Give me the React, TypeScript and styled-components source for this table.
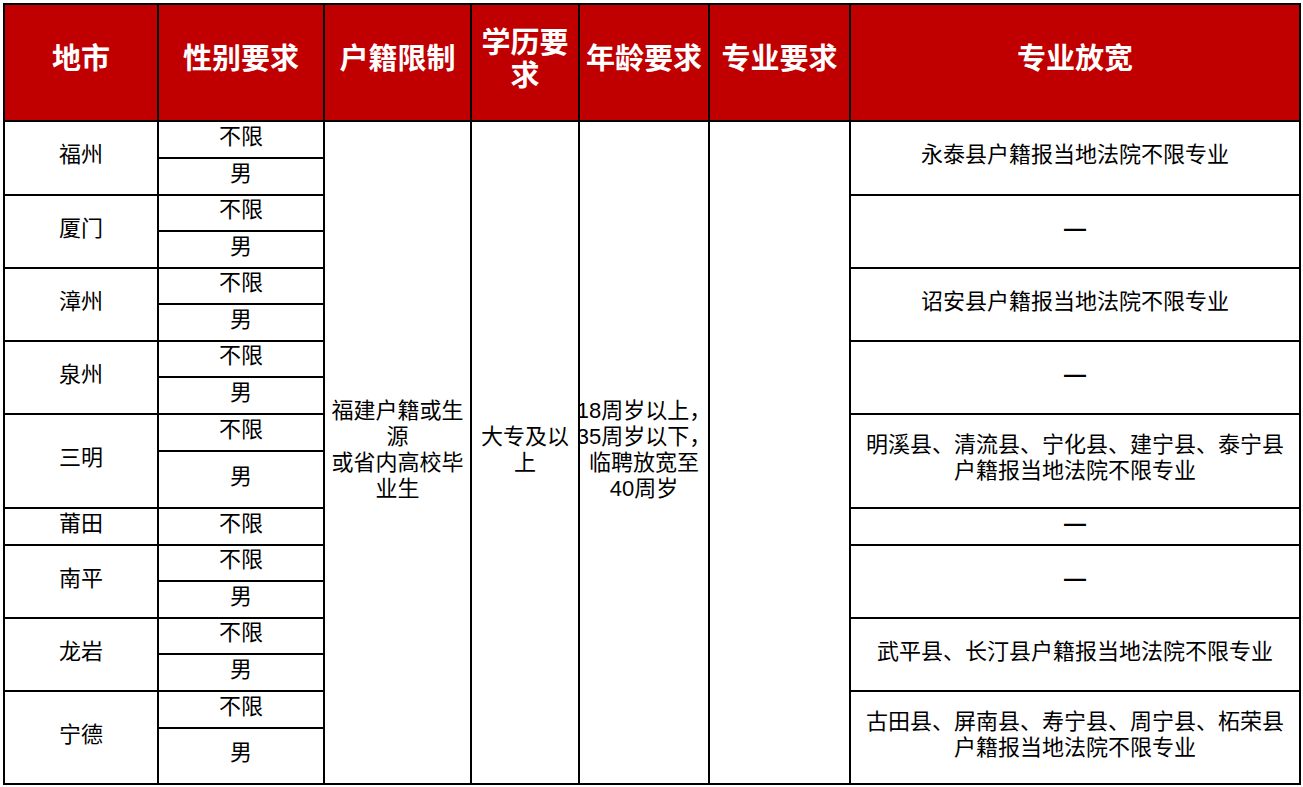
import React from "react";
import styled, { createGlobalStyle } from "styled-components";

const GlobalStyle = createGlobalStyle`
  html, body {
    margin: 0;
    padding: 0;
    background: #ffffff;
  }
  body {
    font-family: "Liberation Sans", "Noto Sans CJK SC", sans-serif;
  }
`;

const Page = styled.div`
  padding: 3px 0 0 3px;
`;

const Table = styled.div`
  display: grid;
  grid-template-columns: 152px 164px 145px 106px 128px 139px 448px;
  grid-template-rows: 115px 35px 35px 34px 35px 34px 35px 34px 35px 35px 55px 35px 34px 35px 34px 35px 35px 54px;
  gap: 2px;
  padding: 2px;
  background: #000000;
  width: max-content;
`;

type Place = { $col: number; $row: number; $span?: number };

const HeaderCell = styled.div<Place>`
  grid-column: ${(p) => p.$col};
  grid-row: ${(p) => p.$row} / span ${(p) => p.$span ?? 1};
  background: #c00000;
  color: #ffffff;
  font-family: "Noto Sans CJK SC", sans-serif;
  font-weight: 700;
  font-size: 29px;
  line-height: 33px;
  display: flex;
  align-items: center;
  justify-content: center;
  text-align: center;
  padding: 0 0 12px;
  box-sizing: border-box;
`;

const BodyCell = styled.div<Place>`
  grid-column: ${(p) => p.$col};
  grid-row: ${(p) => p.$row} / span ${(p) => p.$span ?? 1};
  background: #ffffff;
  color: #000000;
  font-family: "Liberation Sans", "Noto Sans CJK SC", sans-serif;
  font-size: 22px;
  line-height: 26px;
  display: flex;
  flex-direction: column;
  align-items: center;
  justify-content: center;
  text-align: center;
  padding: 0 0 6px;
  box-sizing: border-box;
  overflow: hidden;
`;

const Line = styled.span`
  display: block;
  white-space: nowrap;
`;

const DashText = styled.span`
  display: block;
  font-family: "Liberation Sans", sans-serif;
  font-weight: 700;
`;

const WrapText = styled.span`
  display: block;
  max-width: 100%;
`;

type Gender = "不限" | "男";
type City = { name: string; genders: Gender[]; relax: string[] };

const cities: City[] = [
  { name: "福州", genders: ["不限", "男"], relax: ["永泰县户籍报当地法院不限专业"] },
  { name: "厦门", genders: ["不限", "男"], relax: [] },
  { name: "漳州", genders: ["不限", "男"], relax: ["诏安县户籍报当地法院不限专业"] },
  { name: "泉州", genders: ["不限", "男"], relax: [] },
  {
    name: "三明",
    genders: ["不限", "男"],
    relax: ["明溪县、清流县、宁化县、建宁县、泰宁县", "户籍报当地法院不限专业"],
  },
  { name: "莆田", genders: ["不限"], relax: [] },
  { name: "南平", genders: ["不限", "男"], relax: [] },
  { name: "龙岩", genders: ["不限", "男"], relax: ["武平县、长汀县户籍报当地法院不限专业"] },
  {
    name: "宁德",
    genders: ["不限", "男"],
    relax: ["古田县、屏南县、寿宁县、周宁县、柘荣县", "户籍报当地法院不限专业"],
  },
];

const headers = ["地市", "性别要求", "户籍限制", "学历要求", "年龄要求", "专业要求", "专业放宽"];

export default function App() {
  const totalRows = cities.reduce((n, c) => n + c.genders.length, 0);
  let row = 2;
  const cityCells: React.ReactNode[] = [];
  cities.forEach((c) => {
    const start = row;
    const span = c.genders.length;
    cityCells.push(
      <BodyCell key={c.name} $col={1} $row={start} $span={span}>
        <Line>{c.name}</Line>
      </BodyCell>
    );
    c.genders.forEach((g, i) => {
      cityCells.push(
        <BodyCell key={c.name + g} $col={2} $row={start + i}>
          <Line>{g}</Line>
        </BodyCell>
      );
    });
    cityCells.push(
      <BodyCell key={c.name + "relax"} $col={7} $row={start} $span={span}>
        {c.relax.length === 0 ? (
          <DashText>—</DashText>
        ) : (
          c.relax.map((t) => <Line key={t}>{t}</Line>)
        )}
      </BodyCell>
    );
    row += span;
  });

  return (
    <Page>
      <GlobalStyle />
      <Table>
        {headers.map((h, i) => (
          <HeaderCell key={h} $col={i + 1} $row={1}>
            {h}
          </HeaderCell>
        ))}
        {cityCells}
        <BodyCell $col={3} $row={2} $span={totalRows}>
          <WrapText>福建户籍或生源</WrapText>
          <WrapText>或省内高校毕业生</WrapText>
        </BodyCell>
        <BodyCell $col={4} $row={2} $span={totalRows}>
          <WrapText>大专及以上</WrapText>
        </BodyCell>
        <BodyCell $col={5} $row={2} $span={totalRows}>
          <Line>18周岁以上，</Line>
          <Line>35周岁以下，</Line>
          <Line>临聘放宽至</Line>
          <Line>40周岁</Line>
        </BodyCell>
        <BodyCell $col={6} $row={2} $span={totalRows} />
      </Table>
    </Page>
  );
}
